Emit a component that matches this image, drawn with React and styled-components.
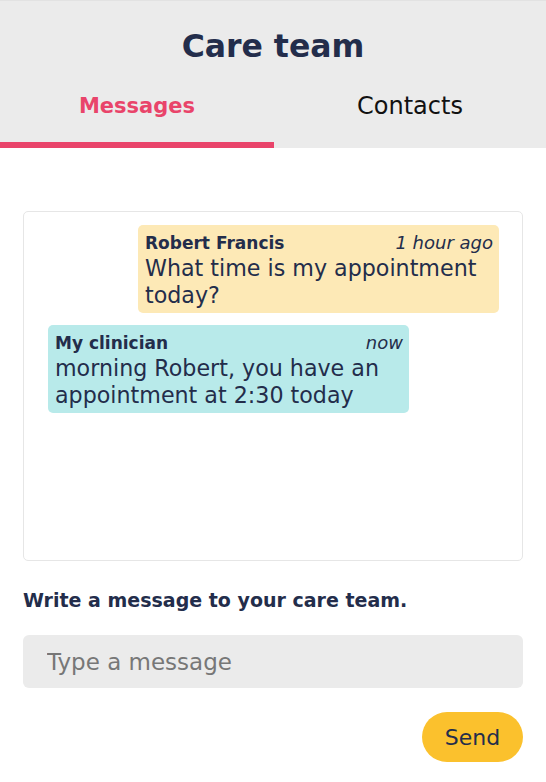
import React from "react";
import styled, { createGlobalStyle } from "styled-components";

const NAVY = "#232d4b";
const FONT = '"DejaVu Sans", "Liberation Sans", sans-serif';

const Global = createGlobalStyle`
  html, body { margin: 0; padding: 0; background: #fff; }
  body { font-family: ${FONT}; color: ${NAVY}; }
  * { box-sizing: border-box; }
`;

const Page = styled.div`
  width: 546px;
  min-height: 782px;
  display: flex;
  flex-direction: column;
`;

const Header = styled.header`
  background: #ebebeb;
  border-top: 1px solid #e2e2e2;
`;

const Title = styled.h1`
  margin: 0;
  padding-top: 25px;
  text-align: center;
  font-size: 31.5px;
  line-height: 40px;
  font-weight: 700;
  color: ${NAVY};
`;

const Tabs = styled.nav`
  display: grid;
  grid-template-columns: 274px 1fr;
`;

const Tab = styled.div`
  padding: 25px 0 21px;
  text-align: center;
  font-size: ${(p) => (p.$active ? "21px" : "24px")};
  line-height: 30px;
  font-weight: ${(p) => (p.$active ? 700 : 400)};
  color: ${(p) => (p.$active ? "#e9446a" : "#111")};
  border-bottom: 6px solid ${(p) => (p.$active ? "#e9446a" : "transparent")};
`;

const Body = styled.main`
  padding: 63px 23px 20px 23px;
  display: flex;
  flex-direction: column;
`;

const Thread = styled.section`
  height: 350px;
  border: 1px solid #e6e6e6;
  border-radius: 5px;
  padding: 13px 23px 13px 24px;
  display: flex;
  flex-direction: column;
  gap: 12px;
`;

const Bubble = styled.div`
  width: 361px;
  align-self: ${(p) => (p.$mine ? "flex-end" : "flex-start")};
  background: ${(p) => (p.$mine ? "#fde9b6" : "#b8eaea")};
  border-radius: 5px;
  padding: 6px 6px 4px 7px;
`;

const BubbleHead = styled.div`
  display: flex;
  justify-content: space-between;
  align-items: baseline;
  line-height: 24px;
`;

const Sender = styled.span`
  font-size: 17px;
  font-weight: 700;
`;

const Time = styled.span`
  font-size: 18px;
  font-style: italic;
`;

const Text = styled.div`
  font-size: 22.2px;
  line-height: 27px;
`;

const Prompt = styled.h2`
  margin: 24px 0 0;
  font-size: 19px;
  line-height: 30px;
  font-weight: 700;
  color: ${NAVY};
`;

const Input = styled.input`
  margin-top: 20px;
  height: 53px;
  width: 100%;
  border: none;
  border-radius: 6px;
  background: #ebebeb;
  padding: 0 24px;
  font-family: ${FONT};
  font-size: 23px;
  color: ${NAVY};
  outline: none;
  &::placeholder { color: #777; }
`;

const Actions = styled.div`
  margin-top: 24px;
  display: flex;
  justify-content: flex-end;
`;

const SendButton = styled.button`
  height: 50px;
  width: 101px;
  border: none;
  border-radius: 25px;
  background: #fbc12d;
  color: ${NAVY};
  font-family: ${FONT};
  font-size: 22px;
  cursor: pointer;
`;

const messages = [
  { id: 1, mine: true, sender: "Robert Francis", time: "1 hour ago", text: "What time is my appointment today?" },
  { id: 2, mine: false, sender: "My clinician", time: "now", text: "morning Robert, you have an appointment at 2:30 today" },
];

export default function App() {
  return (
    <Page>
      <Global />
      <Header>
        <Title>Care team</Title>
        <Tabs>
          <Tab $active>Messages</Tab>
          <Tab>Contacts</Tab>
        </Tabs>
      </Header>
      <Body>
        <Thread>
          {messages.map((m) => (
            <Bubble key={m.id} $mine={m.mine}>
              <BubbleHead>
                <Sender>{m.sender}</Sender>
                <Time>{m.time}</Time>
              </BubbleHead>
              <Text>{m.text}</Text>
            </Bubble>
          ))}
        </Thread>
        <Prompt>Write a message to your care team.</Prompt>
        <Input placeholder="Type a message" />
        <Actions>
          <SendButton>Send</SendButton>
        </Actions>
      </Body>
    </Page>
  );
}
